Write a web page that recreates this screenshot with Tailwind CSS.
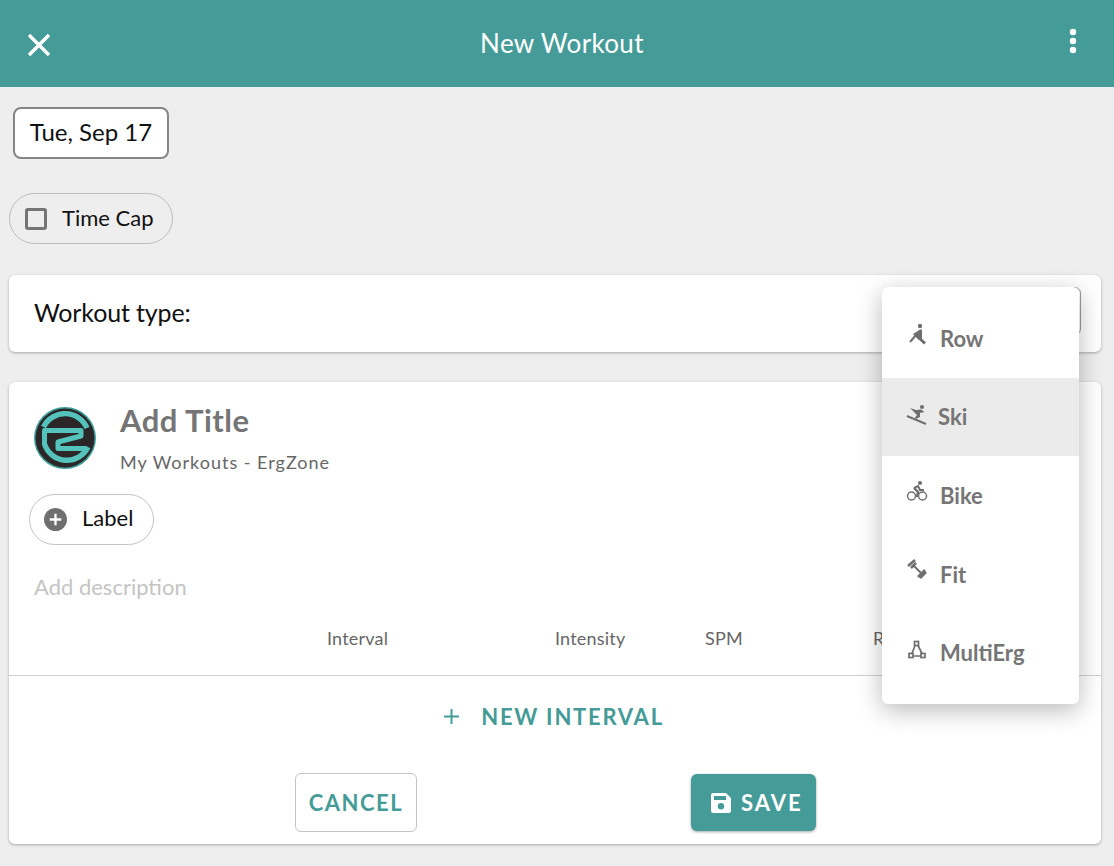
<!DOCTYPE html>
<html lang="en">
<head>
<meta charset="UTF-8">
<title>New Workout</title>
<script src="https://cdn.jsdelivr.net/npm/@tailwindcss/browser@4"></script>
</head>
<body>
<div class="relative w-[1114px] h-[866px] overflow-hidden bg-[#eeeeee] font-['Lato',sans-serif] text-[#111]">

  <!-- header -->
  <header class="h-[87px] bg-[#459b98] flex items-center justify-between pl-[27px] pr-[37px] text-white">
    <svg class="w-6 h-6 mt-[3px]" viewBox="0 0 24 24" fill="none" stroke="white" stroke-width="3.4"><path d="M2 2 L22 22 M22 2 L2 22"/></svg>
    <div class="text-[26px] leading-none tracking-[0.35px] -mt-[2px] ml-1">New Workout</div>
    <svg class="w-2 h-[26px] -mt-[5px]" viewBox="0 0 8 26" fill="white"><circle cx="4" cy="4" r="3.2"/><circle cx="4" cy="13" r="3.2"/><circle cx="4" cy="22" r="3.2"/></svg>
  </header>

  <div class="pl-[9px] pr-[13px]">
    <div class="pt-5 pl-1">
      <button class="w-[156px] h-[52px] bg-white border-2 border-[#858585] rounded-lg text-[24px] pb-[2px]">Tue, Sep 17</button>
    </div>

    <div class="mt-[34px] w-[164px] h-[51px] rounded-full border border-[#bdbdbd] flex items-center pl-4 gap-[15px]">
      <span class="w-[22px] h-[22px] border-[3px] border-[#757575] rounded-[3px] -ml-[1px]"></span>
      <span class="text-[22px] -mt-[2px]">Time Cap</span>
    </div>

    <!-- workout type -->
    <div class="mt-[31px] h-[77px] bg-white rounded-md shadow-[0_1px_3px_rgba(0,0,0,0.3)] flex items-center justify-between pl-[25px] pr-5">
      <span class="text-[25px] tracking-[-0.15px] pb-[2px]">Workout type:</span>
      <div class="w-[60px] h-[48px] -mt-[5px] border border-[#9e9e9e] rounded-md"></div>
    </div>

    <!-- main card -->
    <div class="mt-[30px] h-[462px] bg-white rounded-md shadow-[0_1px_3px_rgba(0,0,0,0.3)]">
      <div class="flex pt-[25px] pl-[25px]">
        <svg class="w-[62px] h-[62px]" viewBox="0 0 62 62" fill="none">
          <circle cx="31" cy="31" r="31" fill="#3f9f9a"/>
          <circle cx="31" cy="31" r="29.5" fill="#2b2729"/>
          <path d="M9.5 20 A24 24 0 0 1 53 21" stroke="#54c3bb" stroke-width="5.4"/>
          <path d="M10.5 38 V23.5 H47 V29 L24 35 V41.5 H52" stroke="#54c3bb" stroke-width="5" stroke-linejoin="round"/>
          <path d="M10.5 37 A23.5 23.5 0 0 0 54 40" stroke="#54c3bb" stroke-width="5.4"/>
        </svg>
        <div class="ml-6">
          <div class="text-[31px] leading-[38px] font-bold text-[#757575] -mt-[6px] tracking-[0.5px]">Add Title</div>
          <div class="text-[18px] leading-[24px] text-[#666] mt-[11px] tracking-[1px]">My Workouts - ErgZone</div>
        </div>
      </div>

      <div class="mt-5 ml-5 w-[125px] h-[51px] rounded-full border border-[#c4c4c4] flex items-center pl-[14px] gap-[15px]">
        <svg class="w-[23px] h-[23px]" viewBox="0 0 24 24"><circle cx="12" cy="12" r="12" fill="#6f6f6f"/><path d="M12 6 V18 M6 12 H18" stroke="white" stroke-width="2.4"/></svg>
        <span class="text-[22px] -mt-[5px]">Label</span>
      </div>

      <div class="mt-[27px] ml-[25px] text-[22px] leading-[30px] text-[#c4c4c4]">Add description</div>

      <div class="relative h-[67px] mt-[7px] border-b border-[#cfcfcf] text-[18px] text-[#666] tracking-[0.2px]">
        <span class="absolute left-[318px] top-[16px]">Interval</span>
        <span class="absolute left-[546px] top-[16px]">Intensity</span>
        <span class="absolute left-[696px] top-[16px]">SPM</span>
        <span class="absolute left-[864px] top-[16px]">Rest</span>
      </div>

      <div class="flex items-center justify-center h-[80px] text-[#459b98] font-bold text-[22px] tracking-[1.75px] -ml-[2px]">
        <svg class="w-[15px] h-[15px] mr-[22px]" viewBox="0 0 15 15" stroke="#459b98" stroke-width="2"><path d="M7.5 0 V15 M0 7.5 H15"/></svg>
        NEW INTERVAL
      </div>

      <div class="flex pt-5">
        <button class="ml-[286px] w-[122px] h-[59px] -mt-[3px] border border-[#c4c4c4] rounded-md text-[#459b98] font-bold text-[22px] tracking-[1.5px]">CANCEL</button>
        <button class="ml-[274px] w-[125px] h-[57px] -mt-[2px] bg-[#459b98] rounded-md shadow-[0_1px_3px_rgba(0,0,0,0.35)] text-white font-bold text-[22px] tracking-[2px] flex items-center pl-5 gap-[10px]">
          <svg class="w-5 h-5" viewBox="0 0 20 20" fill="white"><path fill-rule="evenodd" d="M2 0 H15 L20 5 V18 A2 2 0 0 1 18 20 H2 A2 2 0 0 1 0 18 V2 A2 2 0 0 1 2 0 Z M3 3 V7 H15 V3 Z M10 10 A3.2 3.2 0 1 0 10 16.4 A3.2 3.2 0 1 0 10 10 Z"/></svg>
          SAVE
        </button>
      </div>
    </div>
  </div>

  <!-- workout type menu -->
  <div class="absolute left-[882px] top-[287px] w-[197px] h-[417px] bg-white rounded-md shadow-[0_6px_24px_rgba(0,0,0,0.28)] py-[12px] flex flex-col text-[22px] font-bold text-[#757575]">
    <div class="h-[79px] flex items-center pl-[18px]">
      <svg class="w-10 h-10 mt-[3px]" viewBox="0 0 40 40" fill="none" stroke="#6f6f6f"><circle cx="20" cy="6" r="2.2" fill="#6f6f6f" stroke="none"/><path d="M13 14 L20 9.5 H22 V20 L19 20 Z" fill="#6f6f6f" stroke="none"/><path d="M10 22 L16 15" stroke-width="2"/><path d="M15 14 L25 23.5" stroke-width="3"/></svg>
      <span>Row</span>
    </div>
    <div class="h-[79px] flex items-center pl-[18px] bg-[#ebebeb]">
      <svg class="w-10 h-10 mt-[1px] -mr-[2px]" viewBox="0 0 40 40" fill="none" stroke="#6f6f6f"><circle cx="22" cy="10" r="2.1" fill="#6f6f6f" stroke="none"/><path d="M10 11 L16 13 L21 12.5 L24.5 15 L20 16 L20 20 L16 22 L15 20.5 L17 18 L14 15 Z" fill="#6f6f6f" stroke="none"/><path d="M7 19 L26 27" stroke-width="2"/></svg>
      <span>Ski</span>
    </div>
    <div class="h-[79px] flex items-center pl-[18px]">
      <svg class="w-10 h-10 -mt-[1px]" viewBox="0 0 40 40" fill="none" stroke="#6f6f6f"><circle cx="11.5" cy="21" r="4" stroke-width="1.5"/><circle cx="22.5" cy="21" r="4" stroke-width="1.5"/><circle cx="20" cy="8" r="2.1" fill="#6f6f6f" stroke="none"/><path d="M14 13 L18 11 L20 15 H24" stroke-width="2"/><path d="M14 13 L18 17 L17 22" stroke-width="2.4"/></svg>
      <span>Bike</span>
    </div>
    <div class="h-[79px] flex items-center pl-[18px]">
      <svg class="w-10 h-10 -mt-[3px]" viewBox="0 0 40 40" fill="none" stroke="#6f6f6f"><path d="M13 12 L22 21" stroke-width="2"/><path d="M8 13 L15 7 M11 15 L16 10 M18 24 L25 17 M20 25 L26 19" stroke-width="2.6"/></svg>
      <span>Fit</span>
    </div>
    <div class="h-[79px] flex items-center pl-[18px]">
      <svg class="w-10 h-10 -mt-[3px]" viewBox="0 0 40 40" fill="none" stroke="#6f6f6f" stroke-width="1.7"><rect x="14.5" y="10.5" width="4" height="4"/><rect x="9" y="22.5" width="4" height="4"/><rect x="21" y="22.5" width="4" height="4"/><path d="M15 14.5 L12 22.5 M18 14.5 L22 22.5 M13 25 H21"/></svg>
      <span>MultiErg</span>
    </div>
  </div>
</div>
</body>
</html>
